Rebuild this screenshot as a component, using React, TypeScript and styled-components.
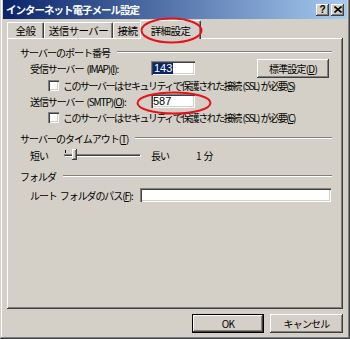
import styled, { createGlobalStyle } from "styled-components";

const GlobalStyle = createGlobalStyle`
  html, body {
    margin: 0;
    padding: 0;
    background: #d4d0c8;
  }
  body {
    font-family: "Noto Sans CJK JP", "Liberation Sans", sans-serif;
    font-size: 10px;
    color: #000;
  }
`;

const Window = styled("div")`
  position: relative;
  box-sizing: border-box;
  width: 350px;
  height: 339px;
  padding: 0 3px 3px 3px;
  display: flex;
  flex-direction: column;
  background: #d4d0c8;
  box-shadow: inset -1px -1px #404040, inset 1px 0 #d4d0c8, inset -2px -2px #808080,
    inset 2px 0 #ffffff;
`;

const TitleBar = styled("div")`
  height: 19px;
  display: flex;
  align-items: center;
  padding: 0 3px 0 3px;
  background: linear-gradient(to right, #0a246a, #a6caf0);
`;

const Title = styled("span")`
  flex: 1;
  color: #fff;
  font-weight: bold;
  font-size: 10.5px;
  letter-spacing: -1px;
  white-space: nowrap;
`;

const CaptionButton = styled("div")<{ $gap?: number }>`
  box-sizing: border-box;
  width: 13px;
  height: 12px;
  margin-left: ${(p) => p.$gap ?? 0}px;
  display: flex;
  align-items: center;
  justify-content: center;
  background: #d4d0c8;
  font-family: "Liberation Sans", sans-serif;
  font-weight: bold;
  font-size: 10px;
  box-shadow: inset -1px -1px #404040, inset 1px 1px #ffffff, inset -2px -2px #808080;
`;

const TabRow = styled("div")`
  margin: 1px 4px 0 4px;
  height: 18px;
  display: flex;
  align-items: flex-end;
  position: relative;
  z-index: 1;
`;

const Tab = styled("div")<{ $w: number; $active?: boolean }>`
  box-sizing: border-box;
  width: ${(p) => p.$w + (p.$active ? 4 : 0)}px;
  height: ${(p) => (p.$active ? 19 : 16)}px;
  margin: ${(p) => (p.$active ? "0 -2px -1px -2px" : "0")};
  padding-top: ${(p) => (p.$active ? 1 : 0)}px;
  display: flex;
  align-items: center;
  justify-content: center;
  background: #d4d0c8;
  border-top: 1px solid #fff;
  border-left: 1px solid #fff;
  border-right: 1px solid #404040;
  border-radius: 2px 2px 0 0;
  box-shadow: inset -1px 0 #808080;
  white-space: nowrap;
  font-size: 10.5px;
  letter-spacing: -0.6px;
`;

const Panel = styled("div")`
  flex: 1;
  margin: 0 4px;
  padding: 7px 11px 0 13px;
  display: flex;
  flex-direction: column;
  box-shadow: inset -1px -1px #404040, inset 1px 1px #ffffff, inset -2px -2px #808080;
`;

const GroupHeader = styled("div")<{ $mt?: number }>`
  height: 14px;
  margin-top: ${(p) => p.$mt ?? 0}px;
  display: flex;
  align-items: center;
  white-space: nowrap;
  letter-spacing: -1px;
  &::after {
    content: "";
    flex: 1;
    margin-left: 7px;
    height: 0;
    border-top: 1px solid #808080;
    border-bottom: 1px solid #ffffff;
  }
`;

const Row = styled("div")<{ $h?: number; $mt?: number; $indent?: number }>`
  height: ${(p) => p.$h ?? 16}px;
  margin-top: ${(p) => p.$mt ?? 0}px;
  padding-left: ${(p) => p.$indent ?? 10}px;
  display: flex;
  align-items: center;
  white-space: nowrap;
`;

const Label = styled("span")<{ $w?: number; $tight?: boolean }>`
  width: ${(p) => (p.$w ? `${p.$w}px` : "auto")};
  flex-shrink: 0;
  letter-spacing: ${(p) => (p.$tight ? -1.5 : -1.1)}px;
  word-spacing: ${(p) => (p.$tight ? 1 : 2)}px;
`;

const TextBox = styled("div")<{ $w?: number }>`
  box-sizing: border-box;
  width: ${(p) => (p.$w ? `${p.$w}px` : "auto")};
  flex: ${(p) => (p.$w ? "none" : "1")};
  height: 14px;
  margin-right: ${(p) => (p.$w ? 0 : 1)}px;
  padding: 0 2px;
  display: flex;
  align-items: center;
  background: #fff;
  font-family: "Liberation Sans", sans-serif;
  font-size: 11px;
  box-shadow: inset 1px 1px #808080, inset 2px 2px #404040, inset -1px -1px #ffffff,
    inset -2px -2px #d4d0c8;
`;

const Selected = styled("span")`
  background: #0a246a;
  color: #fff;
  padding: 0 1px;
  line-height: 11px;
`;

const PushButton = styled("div")<{ $default?: boolean; $w?: number }>`
  box-sizing: border-box;
  width: ${(p) => p.$w ?? 72}px;
  height: 19px;
  display: flex;
  align-items: center;
  justify-content: center;
  background: #d4d0c8;
  letter-spacing: -0.8px;
  white-space: nowrap;
  ${(p) => (p.$default ? "border: 1px solid #000;" : "")}
  box-shadow: inset -1px -1px #404040, inset 1px 1px #ffffff, inset -2px -2px #808080;
`;

const CheckBox = styled("div")`
  box-sizing: border-box;
  width: 11px;
  height: 11px;
  margin-right: 4px;
  flex-shrink: 0;
  background: #fff;
  box-shadow: inset 1px 1px #808080, inset 2px 2px #404040, inset -1px -1px #ffffff,
    inset -2px -2px #d4d0c8;
`;

const Slider = styled("div")`
  position: relative;
  width: 77px;
  height: 18px;
  flex-shrink: 0;
  margin-right: 10px;
  &::before {
    content: "";
    position: absolute;
    left: 0;
    right: 0;
    top: 8px;
    height: 3px;
    border-top: 1px solid #808080;
    border-left: 1px solid #808080;
    border-bottom: 1px solid #fff;
    border-right: 1px solid #fff;
    box-sizing: border-box;
    background: #404040;
  }
`;

const Tick = styled("div")`
  position: absolute;
  left: 1px;
  top: 4px;
  width: 1px;
  height: 3px;
  background: #000;
`;

const Thumb = styled("div")`
  position: absolute;
  left: 8px;
  top: 3px;
  width: 5px;
  height: 11px;
  box-sizing: border-box;
  background: #d4d0c8;
  box-shadow: inset -1px -1px #404040, inset 1px 1px #ffffff, inset -2px -2px #808080;
`;

const Spacer = styled("span")`
  flex: 1;
`;

const ButtonRow = styled("div")`
  height: 19px;
  margin: 5px 0 3px 0;
  padding-right: 4px;
  display: flex;
  justify-content: flex-end;
  gap: 6px;
`;

const Circle = styled("svg")<{ $x: number; $y: number }>`
  position: absolute;
  left: ${(p) => p.$x}px;
  top: ${(p) => p.$y}px;
  overflow: visible;
  pointer-events: none;
  z-index: 5;
`;

const SslText = ({ k }: { k: string }) => (
  <Label $tight>
    このサーバーはセキュリティで保護された接続 (SSL) が必要(<u>{k}</u>)
  </Label>
);

export default function App() {
  return (
    <>
      <GlobalStyle />
      <Window>
        <TitleBar>
          <Title>インターネット電子メール設定</Title>
          <CaptionButton>?</CaptionButton>
          <CaptionButton $gap={2}>
            <svg width="8" height="7" viewBox="0 0 8 7">
              <path d="M0.5 0.5 L7.5 6.5 M7.5 0.5 L0.5 6.5" stroke="#000" strokeWidth="1.6" />
            </svg>
          </CaptionButton>
        </TitleBar>
        <TabRow>
          <Tab $w={37}>全般</Tab>
          <Tab $w={69}>送信サーバー</Tab>
          <Tab $w={29}>接続</Tab>
          <Tab $w={57} $active>
            詳細設定
          </Tab>
        </TabRow>
        <Panel>
          <GroupHeader>サーバーのポート番号</GroupHeader>
          <Row $h={18}>
            <Label $w={121}>
              受信サーバー (IMAP)(<u>I</u>):
            </Label>
            <TextBox $w={44}>
              <Selected>143</Selected>
            </TextBox>
            <Spacer />
            <PushButton $w={72} style={{ marginRight: 3 }}>
              標準設定(<u>D</u>)
            </PushButton>
          </Row>
          <Row $indent={28}>
            <CheckBox />
            <SslText k="S" />
          </Row>
          <Row>
            <Label $w={121}>
              送信サーバー (SMTP)(<u>O</u>):
            </Label>
            <TextBox $w={44}>587</TextBox>
          </Row>
          <Row $indent={28}>
            <CheckBox />
            <SslText k="C" />
          </Row>
          <GroupHeader $mt={6}>
            サーバーのタイムアウト(<u>T</u>)
          </GroupHeader>
          <Row $h={18} $mt={1}>
            <Label $w={34}>短い</Label>
            <Slider>
              <Tick />
              <Thumb />
            </Slider>
            <Label $w={45}>長い</Label>
            <Label>1 分</Label>
          </Row>
          <GroupHeader $mt={5}>フォルダ</GroupHeader>
          <Row $mt={4}>
            <Label $w={110}>
              ルート フォルダのパス(<u>F</u>):
            </Label>
            <TextBox />
          </Row>
        </Panel>
        <ButtonRow>
          <PushButton $default $w={72}>
            OK
          </PushButton>
          <PushButton $w={73}>キャンセル</PushButton>
        </ButtonRow>
        <Circle $x={141} $y={18} width="61" height="25">
          <ellipse cx="30.5" cy="12.5" rx="30" ry="12" fill="none" stroke="#e8101a" strokeWidth="2" />
        </Circle>
        <Circle $x={137} $y={92} width="74" height="22">
          <ellipse cx="37" cy="11" rx="36.5" ry="10.5" fill="none" stroke="#e8101a" strokeWidth="2" />
        </Circle>
      </Window>
    </>
  );
}
